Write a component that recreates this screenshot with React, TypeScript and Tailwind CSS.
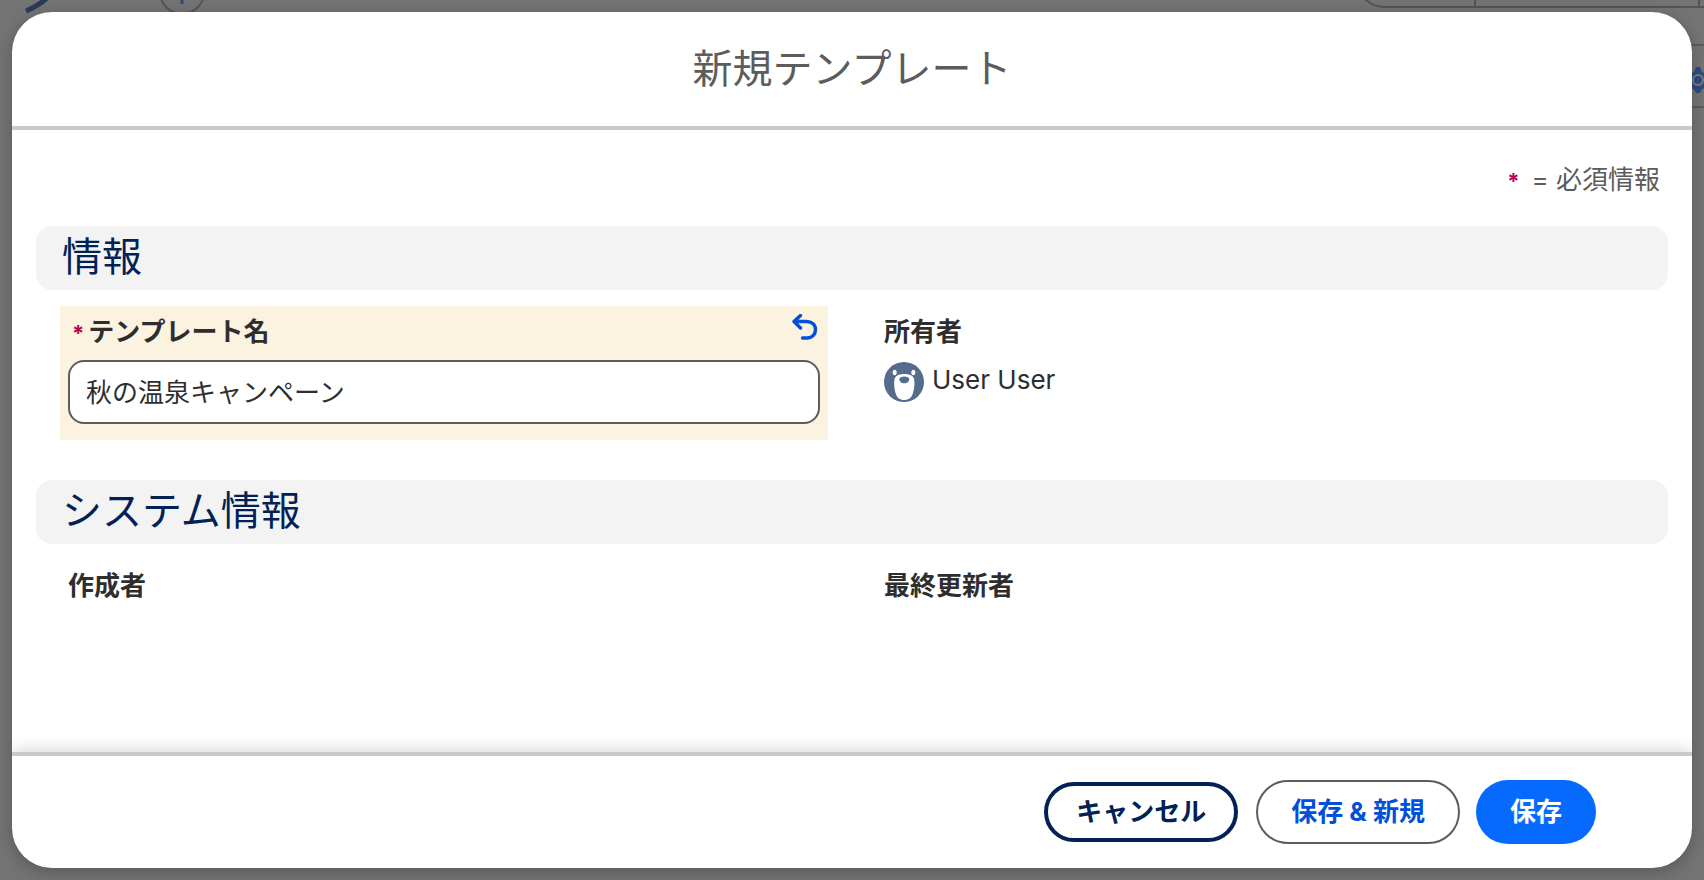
import type { ReactNode } from 'react';

function PageBackdrop() {
  return (
    <div aria-hidden="true" className="absolute inset-0 overflow-hidden pointer-events-none">
      {/* App logo and add button */}
      <svg className="absolute top-0 left-0" width="240" height="16" fill="none">
        <path d="M26 11 Q38 6 47 -2" stroke="#293b57" strokeWidth="5" />
        <circle cx="182" cy="-8" r="22" stroke="#565656" strokeWidth="2" />
        <path d="M182 -8 V4" stroke="#2f4a75" strokeWidth="3" />
      </svg>
      {/* Search bar and settings button */}
      <svg className="absolute top-0 right-0" width="344" height="112" fill="none">
        <path d="M4 -2 Q12 7 26 7 H344 M115 0 V7 M339 0 V7" stroke="#555555" strokeWidth="2" />
        <path d="M328 45 H344 M328 107 H344" stroke="#5c5c5c" strokeWidth="2" />
        <path
          d="M336 67 h4 l2 5 5 2 5 -2 V90 l-5 -2 -5 1 -2 4 h-4 l-2 -4 -5 -1 -5 2 V72 l5 2 5 -2z"
          fill="#2f4c7c"
        />
        <circle cx="338" cy="80" r="5" stroke="#7b7f86" strokeWidth="2" />
      </svg>
    </div>
  );
}

function SectionTitle({ children }: { children: ReactNode }) {
  return (
    <h3 className="h-16 px-[26px] rounded-2xl bg-[#f3f3f3] text-[40px] leading-[62px] text-[#022256]">
      {children}
    </h3>
  );
}

function UndoIcon() {
  return (
    <svg width="28" height="28" viewBox="0 0 28 28" fill="none" aria-hidden="true">
      <path
        d="M8.500 1.500 L2 7.500 L8.500 14 M2.500 7.500 H14.500 C20 7.500 23.500 11 23.500 15.800 C23.500 20.500 20 24 15.500 24 H10.500"
        stroke="#0250d9"
        strokeWidth="3.400"
        strokeLinecap="round"
        strokeLinejoin="round"
      />
    </svg>
  );
}

function Avatar() {
  return (
    <svg width="40" height="40" viewBox="0 0 40 40" aria-hidden="true" className="shrink-0">
      <circle cx="20" cy="20" r="20" fill="#566c8c" />
      <ellipse cx="10.700" cy="10.500" rx="2" ry="2.800" fill="#fff" />
      <ellipse cx="29.300" cy="10.500" rx="2" ry="2.800" fill="#fff" />
      <path
        d="M20.200 12 C26 12 30 14 30.300 18 C30.600 21 30.600 26 29 31 C27.500 36 24.500 38 20.200 38 C16 38 13 36 11.500 31 C10 26 10 21 10.400 18 C10.800 14 14.500 12 20.200 12Z"
        fill="#fff"
      />
      <path
        d="M20.300 14.500 C23 14.500 25.300 15.500 25.300 17.200 C25.300 19.500 22.800 21.300 20.300 21.300 C17.800 21.300 15.300 19.500 15.300 17.200 C15.300 15.500 17.600 14.500 20.300 14.500Z"
        fill="#566c8c"
      />
    </svg>
  );
}

export default function App() {
  return (
    <div className="relative flex min-h-screen bg-[#747474] p-3 font-[Inter,'Noto_Sans_CJK_JP',sans-serif] text-[26px] leading-9 text-[#2e2e2e]">
      <PageBackdrop />
      <div
        role="dialog"
        aria-labelledby="dialog-title"
        className="relative flex flex-1 flex-col overflow-hidden rounded-[40px] bg-white shadow-[0_4px_16px_2px_rgba(0,0,0,0.2)]"
      >
        <header className="border-b-4 border-[#c9c9c9] px-6 py-7 text-center">
          <h2 id="dialog-title" className="text-[40px] leading-[58px] text-[#5c5c5c]">
            新規テンプレート
          </h2>
        </header>

        <form className="flex flex-1 flex-col">
          <div className="flex-1 px-6 pt-8">
            <p className="mb-7 pr-2 text-right text-[#5c5c5c]">
              <span className="mr-3 text-[22px] leading-none font-bold text-[#b60554]">*</span>
              = 必須情報
            </p>

            <SectionTitle>情報</SectionTitle>
            <div className="mt-4 mb-10 grid grid-cols-2 gap-12 px-6">
              <div className="bg-[#fbf3e0] px-2 pt-2 pb-4">
                <div className="mb-[10px] flex items-start justify-between">
                  <label htmlFor="template-name" className="font-bold">
                    <span className="px-1 text-[22px] leading-none text-[#b60554]">*</span>
                    テンプレート名
                  </label>
                  <button type="button" aria-label="元に戻す">
                    <UndoIcon />
                  </button>
                </div>
                <input
                  id="template-name"
                  type="text"
                  defaultValue="秋の温泉キャンペーン"
                  className="block h-16 w-full rounded-2xl border-2 border-[#5c5c5c] bg-white px-4 pb-1 outline-none"
                />
              </div>
              <div className="px-2 pt-2">
                <p className="font-bold">所有者</p>
                <div className="mt-3 flex items-start gap-2">
                  <Avatar />
                  <span>User User</span>
                </div>
              </div>
            </div>

            <SectionTitle>システム情報</SectionTitle>
            <div className="mt-4 grid grid-cols-2 gap-12 px-6">
              <p className="px-2 pt-2 font-bold">作成者</p>
              <p className="px-2 pt-2 font-bold">最終更新者</p>
            </div>
          </div>

          <footer className="flex items-center justify-end gap-4 border-t-4 border-[#c9c9c9] py-6 pr-24 font-bold shadow-[0_-2px_16px_rgba(0,0,0,0.16)]">
            <button type="button" className="mr-[2px] h-[60px] rounded-full border-4 border-[#022256] px-7 text-[#022256]">
              キャンセル
            </button>
            <button type="button" className="h-16 rounded-full border-2 border-[#5c5c5c] px-[33px] text-[#0250d9]">
              保存 &amp; 新規
            </button>
            <button type="submit" className="h-16 rounded-full bg-[#066afe] px-[34px] text-white">
              保存
            </button>
          </footer>
        </form>
      </div>
    </div>
  );
}
